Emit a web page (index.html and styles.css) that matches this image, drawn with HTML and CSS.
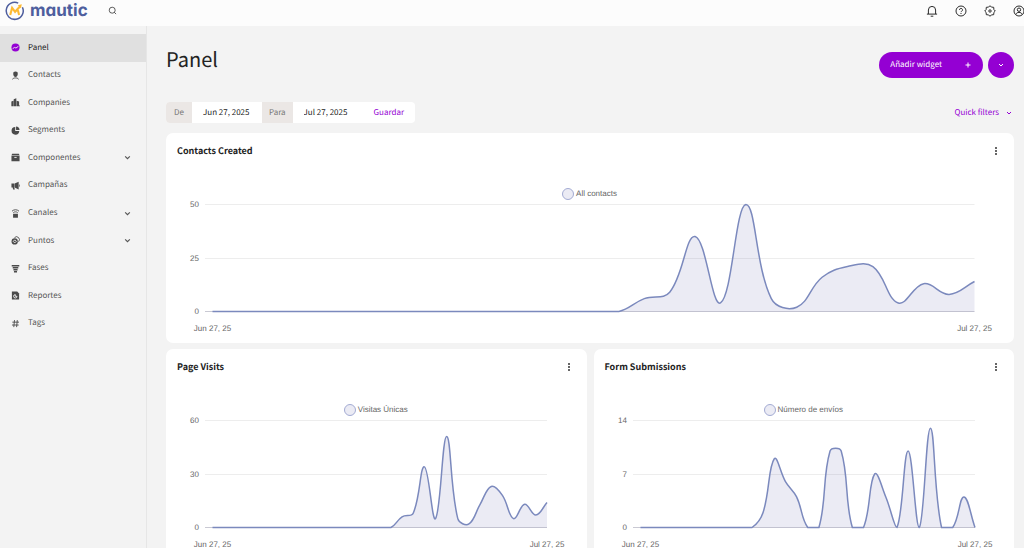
FILE: index.html
```html
<!DOCTYPE html>
<html lang="es">
<head>
  <meta charset="UTF-8">
  <meta name="viewport" content="width=device-width, initial-scale=1.0">
  <title>Panel | Mautic</title>
  <link rel="stylesheet" href="styles.css">
</head>
<body>
  <header class="topbar">
    <a class="brand" href="#">
      <svg class="brand-mark" viewBox="0 0 20 20" fill="none">
        <path d="M17.4 6.2A8.5 8.5 0 1 1 13.2 2.1" stroke="#4e5e9e" stroke-width="1.5"/>
        <path d="M5.2 14L7.1 6.8L10.1 10.8L15.2 5.2M12.9 9.2L14.1 14" stroke="#fdb933" stroke-width="2.1"/>
        <path d="M12.8 4.3L16.8 3.2L15.9 7.3z" fill="#fdb933"/>
      </svg>
      <span class="brand-name">mautic</span>
    </a>
    <button class="icon-btn search" type="button" aria-label="Buscar">
      <svg viewBox="0 0 12 12"><circle cx="5.6" cy="5.6" r="4"/><path d="M8.4 8.4L10.8 10.8"/></svg>
    </button>
    <div class="topbar-actions">
      <button class="icon-btn" type="button" aria-label="Notificaciones">
        <svg viewBox="0 0 12 12"><path d="M2.4 9V5a3.6 3.6 0 0 1 7.2 0v4M.9 9.1h10.2M4.7 11.2h2.6"/></svg>
      </button>
      <button class="icon-btn" type="button" aria-label="Ayuda">
        <svg viewBox="0 0 12 12"><circle cx="6" cy="6" r="5"/><path d="M4.5 4.9a1.5 1.5 0 1 1 2.2 1.3c-.5.3-.7.5-.7.9M6 8v1"/></svg>
      </button>
      <button class="icon-btn" type="button" aria-label="Ajustes">
        <svg viewBox="0 0 12 12"><path d="M6 .7L7.4 2.1L9.7 2.3L9.9 4.6L11.3 6L9.9 7.4L9.7 9.7L7.4 9.9L6 11.3L4.6 9.9L2.3 9.7L2.1 7.4L.7 6L2.1 4.600L2.300 2.300L4.600 2.100z"/><circle cx="6" cy="6" r="1.2"/></svg>
      </button>
      <button class="icon-btn" type="button" aria-label="Cuenta">
        <svg viewBox="0 0 12 12"><circle cx="6" cy="6" r="5"/><circle cx="6" cy="4.7" r="1.7"/><path d="M2.8 9.6c.5-1.6 1.6-2.2 3.2-2.2s2.7.6 3.2 2.2"/></svg>
      </button>
    </div>
  </header>

  <div class="layout">
    <nav class="sidebar">
      <ul class="menu">
        <li><a class="menu-link active" href="#">
          <svg class="menu-icon" viewBox="0 0 10 10"><circle cx="5" cy="5" r="4.5"/><path class="cut" d="M1.8 6.3L4 4.9L5.5 5.6L8.2 3.7"/></svg>
          <span>Panel</span></a></li>
        <li><a class="menu-link" href="#">
          <svg class="menu-icon" viewBox="0 0 10 10"><path d="M5 .6a2.500 2.500 0 0 1 2.500 2.700c0 1.600-.9 3.500-2.500 3.500S2.500 4.900 2.500 3.300A2.500 2.500 0 0 1 5 .6z"/><path class="line" d="M1.500 9.200C2.400 8 3.700 7.700 5 7.700s2.600.3 3.500 1.500"/></svg>
          <span>Contacts</span></a></li>
        <li><a class="menu-link" href="#">
          <svg class="menu-icon" viewBox="0 0 10 10"><path d="M.4 9.200V4l2.300-1v6.200zM3 9.200V1.500L5.900.4V9.200zM6.300 9.200V3l2.700 1V8.400h.9V9.200z"/></svg>
          <span>Companies</span></a></li>
        <li><a class="menu-link" href="#">
          <svg class="menu-icon" viewBox="0 0 10 10"><path d="M4.700 1v4.500h4.500A4.300 4.300 0 1 1 4.700 1z"/><path d="M5.600.6a4.100 4.100 0 0 1 3.900 3.900H5.600z"/></svg>
          <span>Segments</span></a></li>
        <li><a class="menu-link" href="#">
          <svg class="menu-icon" viewBox="0 0 10 10"><path d="M1.300.8h7.400l.8 1.800H.5zM.5 3h9V9.300H.5z"/><path class="cut" d="M3.700 4.900h2.600"/></svg>
          <span>Componentes</span>
          <svg class="chevron" viewBox="0 0 6 6"><path d="M1 2l2 2 2-2"/></svg></a></li>
        <li><a class="menu-link" href="#">
          <svg class="menu-icon" viewBox="0 0 10 10"><path d="M.5 2.800h3.200v4.700l.6 1.900H2.300L1.900 7.200H.5zM4.100 2.800L8.500.8v8.600L4.100 7.300zM8.900 3.500c1.100.6 1.100 2.500 0 3.100z"/></svg>
          <span>Campañas</span></a></li>
        <li><a class="menu-link" href="#">
          <svg class="menu-icon" viewBox="0 0 10 10"><path d="M2.300 5.300h5.400V9.700H2.300z"/><path class="line" d="M1.100 2.400c2.300-2.100 5.500-2.100 7.800 0M2.600 4c1.400-1.100 3.400-1.100 4.800 0"/></svg>
          <span>Canales</span>
          <svg class="chevron" viewBox="0 0 6 6"><path d="M1 2l2 2 2-2"/></svg></a></li>
        <li><a class="menu-link" href="#">
          <svg class="menu-icon" viewBox="0 0 10 10"><circle cx="4.100" cy="6" r="3.500"/><path class="line" d="M3.900 1.800a3.100 3.100 0 1 1 4.500 4.500"/><path class="cut" d="M4.100 4.300L5.800 6 4.100 7.700 2.500 6z"/></svg>
          <span>Puntos</span>
          <svg class="chevron" viewBox="0 0 6 6"><path d="M1 2l2 2 2-2"/></svg></a></li>
        <li><a class="menu-link" href="#">
          <svg class="menu-icon" viewBox="0 0 10 10"><path d="M.8 1h8.400v1.800H.8zM1.900 3.300h6.200v1.800H1.900zM2.700 5.600h4.600v1.700H2.700zM3.300 7.900h3.400v1.500H3.300z"/></svg>
          <span>Fases</span></a></li>
        <li><a class="menu-link" href="#">
          <svg class="menu-icon" viewBox="0 0 10 10"><path d="M1 .6h5.900l2.100 2.100V9.400H1z"/><path class="cut" d="M4.800 4v1.900h1.900A1.900 1.900 0 1 1 4.800 4z"/></svg>
          <span>Reportes</span></a></li>
        <li><a class="menu-link" href="#">
          <svg class="menu-icon" viewBox="0 0 10 10"><path class="line" d="M3.900 1.200L3.100 9M7 1.200L6.200 9M1.500 3.500h7.400M1.100 6.700h7.400"/></svg>
          <span>Tags</span></a></li>
      </ul>
    </nav>

    <main class="content">
      <div class="page-head">
        <h1>Panel</h1>
        <div class="page-actions">
          <button class="btn btn-add" type="button">
            <span>Añadir widget</span>
            <svg viewBox="0 0 6 6"><path d="M3 .5v5M.5 3h5"/></svg>
          </button>
          <button class="btn btn-round" type="button" aria-label="Más opciones">
            <svg viewBox="0 0 6 6"><path d="M1 2l2 2 2-2"/></svg>
          </button>
        </div>
      </div>

      <div class="filters">
        <form class="date-range">
          <label for="dateFrom">De</label>
          <input type="text" id="dateFrom" value="Jun 27, 2025">
          <label for="dateTo">Para</label>
          <input type="text" id="dateTo" value="Jul 27, 2025">
          <button type="button">Guardar</button>
        </form>
        <button class="quick-filters" type="button">
          <span>Quick filters</span>
          <svg viewBox="0 0 6 6"><path d="M1 2l2 2 2-2"/></svg>
        </button>
      </div>

      <div class="widgets">
        <section class="card card-wide">
          <div class="card-head">
            <h2>Contacts Created</h2>
            <button class="card-menu" type="button" aria-label="Opciones"><svg viewBox="0 0 2 8"><path d="M0 0h2v2H0zM0 3h2v2H0zM0 6h2v2H0z"/></svg></button>
          </div>
          <div class="legend"><span class="legend-dot"></span>All contacts</div>
          <svg class="chart" data-chart="contacts"></svg>
        </section>
        <section class="card">
          <div class="card-head">
            <h2>Page Visits</h2>
            <button class="card-menu" type="button" aria-label="Opciones"><svg viewBox="0 0 2 8"><path d="M0 0h2v2H0zM0 3h2v2H0zM0 6h2v2H0z"/></svg></button>
          </div>
          <div class="legend"><span class="legend-dot"></span>Visitas Únicas</div>
          <svg class="chart" data-chart="visits"></svg>
        </section>
        <section class="card">
          <div class="card-head">
            <h2>Form Submissions</h2>
            <button class="card-menu" type="button" aria-label="Opciones"><svg viewBox="0 0 2 8"><path d="M0 0h2v2H0zM0 3h2v2H0zM0 6h2v2H0z"/></svg></button>
          </div>
          <div class="legend"><span class="legend-dot"></span>Número de envíos</div>
          <svg class="chart" data-chart="forms"></svg>
        </section>
      </div>
    </main>
  </div>
  <script src="charts.js"></script>
</body>
</html>
```
FILE: styles.css
```css
* {
  box-sizing: border-box;
}
body {
  margin: 0;
  background: #f3f3f3;
  color: #222;
  font-family: "Noto Sans CJK SC", "Noto Sans", sans-serif;
  font-size: 8px;
  line-height: 12px;
  text-rendering: geometricPrecision;
}
button, input {
  font: inherit;
  text-rendering: inherit;
  border: none;
  margin: 0;
  padding: 0;
  background: none;
}
button {
  cursor: pointer;
}
a {
  color: inherit;
  text-decoration: none;
}
svg {
  display: block;
  flex: none;
}

/* top bar */
.topbar {
  display: flex;
  align-items: center;
  height: 26px;
  padding-bottom: 5px;
  background: #fcfcfc;
  overflow: hidden;
}
.brand {
  display: flex;
  align-items: center;
  gap: 5px;
  padding-left: 5px;
}
.brand-mark {
  width: 20px;
  height: 20px;
}
.brand-name {
  color: #4e5e9e;
  font-family: Inter, sans-serif;
  font-size: 17px;
  font-weight: 700;
  line-height: 20px;
  font-feature-settings: "cv11";
}
.icon-btn {
  display: flex;
  align-items: center;
  justify-content: center;
  width: 29px;
  height: 20px;
}
.icon-btn svg {
  width: 12px;
  height: 12px;
  fill: none;
  stroke: #2b2b2b;
}
.icon-btn.search {
  margin-left: 10px;
}
.icon-btn.search svg {
  width: 9px;
  height: 9px;
}
.topbar-actions {
  display: flex;
  margin-left: auto;
  margin-right: -9px;
}

/* sidebar */
.layout {
  display: flex;
  min-height: calc(100vh - 26px);
}
.sidebar {
  flex: none;
  width: 147px;
  padding-top: 8px;
  border-right: 1px solid #e6e6e6;
}
.menu {
  display: grid;
  grid-auto-rows: 1fr;
  height: 303px;
  margin: 0;
  padding: 0;
  list-style: none;
}
.menu-link {
  display: flex;
  align-items: center;
  gap: 8px;
  height: 100%;
  padding: 0 15px 0 11px;
  color: #555;
}
.menu-link.active {
  background: #e0e0e0;
  color: #222;
}
.menu-icon {
  width: 9px;
  height: 9px;
  fill: #4a4a4a;
}
.menu-link.active .menu-icon {
  fill: #9400d3;
}
.menu-icon .line {
  fill: none;
  stroke: #4a4a4a;
}
.menu-icon .cut {
  fill: none;
  stroke: #f3f3f3;
}
.chevron {
  width: 7px;
  height: 7px;
  margin-left: auto;
  fill: none;
  stroke: #555;
}

/* page head */
.content {
  flex: 1;
  min-width: 0;
  padding: 20px 10px 10px 19px;
}
.page-head {
  display: flex;
  align-items: center;
  justify-content: space-between;
  height: 37px;
}
h1 {
  margin: 0 0 12px;
  font-size: 20px;
  font-weight: 400;
  line-height: 26px;
}
.page-actions {
  display: flex;
  gap: 5px;
}
.btn {
  display: flex;
  align-items: center;
  height: 26px;
  border-radius: 13px;
  background: #9400d3;
  color: #fff;
}
.btn svg, .quick-filters svg {
  width: 6px;
  height: 6px;
  fill: none;
  stroke: currentColor;
}
.btn-add {
  gap: 23px;
  padding: 0 12px 0 11px;
}
.btn-round {
  justify-content: center;
  width: 26px;
}

/* filters */
.filters {
  display: flex;
  align-items: center;
  justify-content: space-between;
  margin: 19px 0 10px;
}
.date-range {
  display: flex;
  height: 21px;
  line-height: 21px;
  border-radius: 4px;
  background: #fff;
  overflow: hidden;
}
.date-range label {
  min-width: 26px;
  padding: 0 7px;
  background: #ebe7e5;
  color: #777;
  text-align: center;
}
.date-range input {
  width: 70px;
  padding: 0 5px 0 11px;
  color: #222;
}
.date-range button {
  padding: 0 11px;
  color: #9400d3;
}
.quick-filters {
  display: flex;
  align-items: center;
  gap: 7px;
  padding-right: 2px;
  color: #9400d3;
}

/* widgets */
.widgets {
  display: grid;
  grid-template-columns: 1fr 1fr;
  gap: 6px 7px;
}
.card {
  min-width: 0;
  border-radius: 7px;
  background: #fff;
}
.card-wide {
  grid-column: 1 / -1;
}
.card-head {
  display: flex;
  align-items: center;
  justify-content: space-between;
  height: 36px;
  padding: 0 16px 0 11px;
}
h2 {
  margin: 0;
  font-size: 9px;
  font-weight: 700;
  line-height: 14px;
}
.card-menu {
  padding: 4px 1px;
}
.card-menu svg {
  width: 2px;
  height: 8px;
  fill: #666;
}
.legend {
  display: flex;
  align-items: center;
  justify-content: center;
  gap: 2px;
  padding: 18px 1px 0 0;
  color: #666;
  font-family: "Liberation Sans", Arial, sans-serif;
  line-height: 14px;
}
.legend-dot {
  width: 12px;
  height: 12px;
  border: 1px solid #a3abd3;
  border-radius: 50%;
  background: #ebebf4;
}
.chart {
  width: 100%;
  height: 142px;
}
.chart text {
  fill: #666;
  font-family: "Liberation Sans", Arial, sans-serif;
  font-size: 8px;
}
.chart .grid {
  stroke: #ededed;
}
.chart .zero {
  stroke: #c9c9d3;
}
.chart .area {
  fill: #5858a3;
  fill-opacity: 0.12;
}
.chart .series {
  fill: none;
  stroke: #7b89bd;
  stroke-width: 1.5;
}
```
FILE: charts.js
```js
const charts = {
  contacts: { max: 50, data: [0,0,0,0,0,0,0,0,0,0,0,0,0,0,0,0,0,6,9,35,4,50,6,2,16,21,21,4,13,8,14] },
  visits: { max: 60, data: [0,0,0,0,0,0,0,0,0,0,0,0,0,0,0,0,0,6,8,34,5,51,5,2,13,23,18,5,13,7,14] },
  forms: { max: 14, data: [0,0,0,0,0,0,0,0,0,0,0,2,9,6,4,0,0,10,10,0,0,7,4,0,10,0,13,0,0,4,0] }
};

const TOP = 3.5;
const BASE = 110.5;
const TENSION = 0.4;

// smooth line through the points, control points kept inside the plot area
function splinePath(pts) {
  const clamp = y => Math.max(TOP, Math.min(BASE, y));
  const ctrl = pts.map((p, i) => {
    const a = pts[i - 1] || p;
    const b = pts[i + 1] || p;
    const d1 = Math.hypot(p.x - a.x, p.y - a.y);
    const d2 = Math.hypot(b.x - p.x, b.y - p.y);
    const f1 = TENSION * d1 / (d1 + d2);
    const f2 = TENSION * d2 / (d1 + d2);
    return {
      px: p.x - f1 * (b.x - a.x), py: clamp(p.y - f1 * (b.y - a.y)),
      nx: p.x + f2 * (b.x - a.x), ny: clamp(p.y + f2 * (b.y - a.y))
    };
  });
  let d = `M${pts[0].x} ${pts[0].y}`;
  for (let i = 1; i < pts.length; i++) {
    d += `C${ctrl[i - 1].nx} ${ctrl[i - 1].ny} ${ctrl[i].px} ${ctrl[i].py} ${pts[i].x} ${pts[i].y}`;
  }
  return d;
}

function drawChart(svg) {
  const { max, data } = charts[svg.dataset.chart];
  const left = 46.5;
  const right = svg.getBoundingClientRect().width - 39.5;
  const pts = data.map((v, i) => ({
    x: left + (right - left) * i / (data.length - 1),
    y: BASE - (BASE - TOP) * v / max
  }));
  const line = splinePath(pts);
  const ticks = [max, max / 2, 0].map((v, i) => {
    const y = [3.5, 57.5, 110.5][i];
    return `<line class="${v ? 'grid' : 'zero'}" x1="39" x2="${right}" y1="${y}" y2="${y}"/>
      <text x="33" y="${y + 2.5}" text-anchor="end">${v}</text>`;
  }).join('');

  svg.innerHTML = ticks +
    `<path class="area" d="${line}V${BASE}H${left}Z"/>
     <path class="series" d="${line}"/>
     <text x="${left}" y="130" text-anchor="middle">Jun 27, 25</text>
     <text x="${right}" y="130" text-anchor="middle">Jul 27, 25</text>`;
}

function drawAll() {
  document.querySelectorAll('.chart').forEach(drawChart);
}

drawAll();
window.addEventListener('resize', drawAll);
```
